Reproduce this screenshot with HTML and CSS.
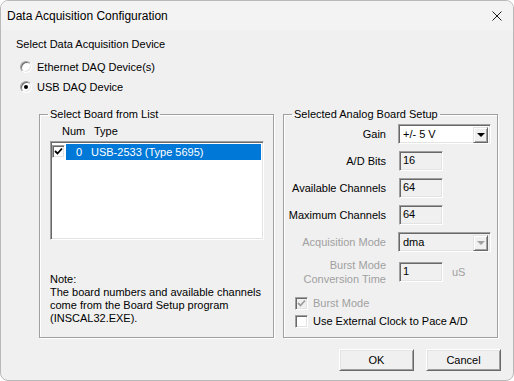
FILE: index.html
```html
<!DOCTYPE html>
<html lang="en">

<head>
    <meta charset="UTF-8">
    <meta name="viewport" content="width=device-width, initial-scale=1.0">
    <title>Data Acquisition Configuration</title>
    <link rel="stylesheet" href="styles.css">
</head>

<body>
    <div class="janela">
        <div class="titulo">
            <span>Data Acquisition Configuration</span>
            <svg class="fechar" width="10" height="10" viewBox="0 0 10 10">
                <path d="M0.5 0.5 L9.5 9.5 M9.5 0.5 L0.5 9.5" stroke="#1b1b1b" stroke-width="1" fill="none" />
            </svg>
        </div>
        <div class="corpo">
            <div class="rotulo">Select Data Acquisition Device</div>
            <div class="radio"><span class="bolinha"></span>Ethernet DAQ Device(s)</div>
            <div class="radio"><span class="bolinha marcada"></span>USB DAQ Device</div>

            <div class="grupos">
                <fieldset class="grupo esquerda">
                    <legend>Select Board from List</legend>
                    <div class="cabecalho"><span class="col-num">Num</span><span>Type</span></div>
                    <div class="lista">
                        <div class="linha">
                            <span class="check afundado">
                                <svg width="9" height="9" viewBox="0 0 9 9">
                                    <path d="M1 4 L3.5 6.5 L8 1.5" stroke="#000" stroke-width="1.8" fill="none" />
                                </svg>
                            </span>
                            <span class="selecionado"><span class="num">0</span>USB-2533 (Type 5695)</span>
                        </div>
                    </div>
                    <p class="nota">Note:<br>The board numbers and available channels<br>come from the Board Setup program<br>(INSCAL32.EXE).</p>
                </fieldset>

                <fieldset class="grupo direita">
                    <legend>Selected Analog Board Setup</legend>
                    <div class="campo">
                        <span class="nome">Gain</span>
                        <div class="combo afundado">
                            <span class="valor">+/- 5 V</span>
                            <span class="seta"><i></i></span>
                        </div>
                    </div>
                    <div class="campo">
                        <span class="nome">A/D Bits</span>
                        <div class="caixa afundado">16</div>
                    </div>
                    <div class="campo">
                        <span class="nome">Available Channels</span>
                        <div class="caixa afundado">64</div>
                    </div>
                    <div class="campo">
                        <span class="nome">Maximum Channels</span>
                        <div class="caixa afundado">64</div>
                    </div>
                    <div class="campo desligado">
                        <span class="nome">Acquisition Mode</span>
                        <div class="combo afundado cinza">
                            <span class="valor">dma</span>
                            <span class="seta"><i></i></span>
                        </div>
                    </div>
                    <div class="campo desligado alto">
                        <span class="nome">Burst Mode<br>Conversion Time</span>
                        <div class="caixa afundado">1</div>
                        <span class="unidade">uS</span>
                    </div>
                    <div class="opcao desligado primeira">
                        <span class="check afundado cinza">
                            <svg width="9" height="9" viewBox="0 0 9 9">
                                <path d="M1 4 L3.5 6.5 L8 1.5" stroke="#a0a0a0" stroke-width="1.8" fill="none" />
                            </svg>
                        </span>
                        Burst Mode
                    </div>
                    <div class="opcao">
                        <span class="check afundado"></span>
                        Use External Clock to Pace A/D
                    </div>
                </fieldset>
            </div>

            <div class="botoes">
                <div class="botao">OK</div>
                <div class="botao">Cancel</div>
            </div>
        </div>
    </div>
</body>

</html>
```

FILE: styles.css
```css
* {
    margin: 0;
    padding: 0;
    box-sizing: border-box;
}

body {
    background-color: white;
    font-family: "Liberation Sans", Arial, sans-serif;
    font-size: 11px;
    color: black;
}

.janela {
    width: 514px;
    height: 381px;
    border: 1px solid rgb(185, 185, 185);
    border-radius: 8px;
    background-color: rgb(240, 240, 240);
    overflow: hidden;
}

.titulo {
    display: flex;
    height: 29px;
    padding: 0 11px 0 6px;
    justify-content: space-between;
    align-items: center;
    font-size: 12px;
    background-color: rgb(243, 243, 243);
}

.corpo {
    padding: 8px 12px 0 15px;
}

.rotulo {
    line-height: 13px;
    margin-bottom: 6px;
}

.radio {
    display: flex;
    height: 20px;
    padding-left: 4px;
    gap: 5px;
    align-items: center;
}

/* borda 3D afundada do windows classico */
.afundado {
    border: 1px solid;
    border-color: rgb(160, 160, 160) white white rgb(160, 160, 160);
    box-shadow: inset 1px 1px 0 rgb(105, 105, 105), inset -1px -1px 0 rgb(227, 227, 227);
}

.bolinha {
    display: flex;
    width: 12px;
    height: 12px;
    border-radius: 50%;
    background-color: white;
    border: 1px solid;
    border-color: rgb(160, 160, 160) white white rgb(160, 160, 160);
    box-shadow: inset 1px 1px 0 rgb(105, 105, 105), inset -1px -1px 0 rgb(227, 227, 227);
    justify-content: center;
    align-items: center;
}

.marcada::after {
    content: "";
    width: 4px;
    height: 4px;
    border-radius: 50%;
    background-color: black;
}

.grupos {
    display: flex;
    gap: 9px;
    margin: 11px 0 0 23px;
}

.grupo {
    height: 230px;
    border: 1px solid rgb(160, 160, 160);
    box-shadow: 1px 1px 0 white, inset 1px 1px 0 white;
}

.grupo legend {
    line-height: 13px;
    margin-left: 8px;
    padding: 0 2px;
}

.esquerda {
    width: 235px;
}

.direita {
    width: 215px;
}

.cabecalho {
    display: flex;
    line-height: 13px;
    margin-top: 4px;
    padding-left: 22px;
}

.col-num {
    width: 32px;
}

.lista {
    width: 214px;
    height: 99px;
    margin: 3px 0 0 10px;
    padding: 2px;
    background-color: white;
    border: 1px solid;
    border-color: rgb(160, 160, 160) white white rgb(160, 160, 160);
    box-shadow: inset 1px 1px 0 rgb(105, 105, 105), inset -1px -1px 0 rgb(227, 227, 227);
}

.linha {
    display: flex;
    height: 16px;
    margin-left: -1px;
}

.check {
    display: flex;
    width: 13px;
    height: 13px;
    background-color: white;
    justify-content: center;
    align-items: center;
    flex-shrink: 0;
}

.linha .check {
    margin-top: 1px;
}

.selecionado {
    display: flex;
    flex: 1;
    align-items: center;
    margin-left: 1px;
    background-color: rgb(0, 120, 215);
    color: white;
}

.num {
    width: 25px;
    padding-left: 10px;
}

.nota {
    line-height: 13px;
    margin: 33px 0 0 10px;
}

.campo {
    display: flex;
    height: 20px;
    margin-top: 7px;
    align-items: center;
}

.direita legend + .campo {
    margin-top: 3px;
}

.alto {
    height: 26px;
}

.nome {
    width: 102px;
    margin-right: 13px;
    text-align: right;
    line-height: 14px;
}

.desligado {
    color: rgb(160, 160, 160);
}

.caixa {
    width: 44px;
    height: 20px;
    padding: 2px 0 0 3px;
    color: black;
    background-color: rgb(240, 240, 240);
}

.unidade {
    margin-left: 9px;
}

.combo {
    display: flex;
    width: 93px;
    height: 20px;
    margin-left: -1px;
    padding: 2px;
    background-color: white;
    color: black;
}

.combo.cinza {
    background-color: rgb(240, 240, 240);
}

.valor {
    flex: 1;
    padding: 1px 0 0 2px;
}

.seta {
    display: flex;
    width: 15px;
    height: 16px;
    background-color: rgb(240, 240, 240);
    border: 1px solid;
    border-color: rgb(227, 227, 227) rgb(105, 105, 105) rgb(105, 105, 105) rgb(227, 227, 227);
    box-shadow: inset 1px 1px 0 white, inset -1px -1px 0 rgb(160, 160, 160);
    justify-content: center;
    align-items: center;
}

.seta i {
    width: 0;
    height: 0;
    border-left: 4px solid transparent;
    border-right: 4px solid transparent;
    border-top: 4px solid black;
}

.cinza .seta i {
    border-top-color: rgb(160, 160, 160);
}

.check.cinza {
    background-color: rgb(240, 240, 240);
}

.opcao {
    display: flex;
    height: 18px;
    padding-left: 11px;
    gap: 5px;
    align-items: center;
}

.primeira {
    margin-top: 9px;
}

.botoes {
    display: flex;
    gap: 12px;
    margin-top: 11px;
    justify-content: flex-end;
}

.botao {
    display: flex;
    width: 75px;
    height: 22px;
    justify-content: center;
    align-items: center;
    border: 1px solid;
    border-color: white rgb(105, 105, 105) rgb(105, 105, 105) white;
    box-shadow: inset 1px 1px 0 rgb(227, 227, 227), inset -1px -1px 0 rgb(160, 160, 160);
}
```
